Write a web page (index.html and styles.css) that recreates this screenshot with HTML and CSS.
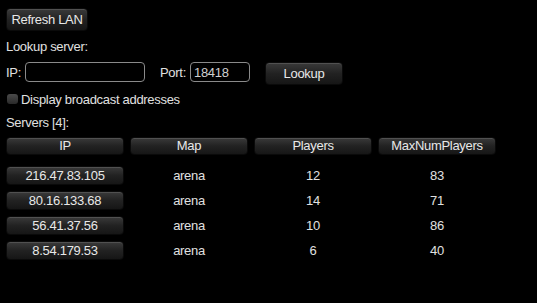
FILE: index.html
```html
<!DOCTYPE html>
<html>
<head>
	<meta charset="UTF-8">
	<title>LAN servers</title>
	<link rel="stylesheet" href="styles.css">
</head>
<body>
	<div class="panel">
		<button class="btn refresh">Refresh LAN</button>

		<p class="label lookup-title">Lookup server:</p>
		<div class="lookup">
			<span class="label">IP:</span>
			<input type="text" class="field ip-field" value="">
			<span class="label port-label">Port:</span>
			<input type="text" class="field port-field" value="18418">
			<button class="btn lookup-btn">Lookup</button>
		</div>

		<label class="check-row">
			<span class="check"></span>
			<span class="label">Display broadcast addresses</span>
		</label>

		<p class="label servers-title">Servers [4]:</p>
		<div class="servers">
			<div class="btn head">IP</div>
			<div class="btn head">Map</div>
			<div class="btn head">Players</div>
			<div class="btn head">MaxNumPlayers</div>

			<div class="btn addr">216.47.83.105</div>
			<div class="cell">arena</div>
			<div class="cell">12</div>
			<div class="cell">83</div>

			<div class="btn addr">80.16.133.68</div>
			<div class="cell">arena</div>
			<div class="cell">14</div>
			<div class="cell">71</div>

			<div class="btn addr">56.41.37.56</div>
			<div class="cell">arena</div>
			<div class="cell">10</div>
			<div class="cell">86</div>

			<div class="btn addr">8.54.179.53</div>
			<div class="cell">arena</div>
			<div class="cell">6</div>
			<div class="cell">40</div>
		</div>
	</div>
</body>
</html>
```

FILE: styles.css
```css
html,body{
	margin:0;
	padding:0;
	background:#000;
}
body{
	font-family:"Liberation Sans",Arial,sans-serif;
	font-size:13px;
	letter-spacing:-0.3px;
	color:#e0e0e0;
}
p{
	margin:0;
}
.panel{
	padding:8px 0 0 6px;
}
.btn{
	font-family:inherit;
	font-size:13px;
	letter-spacing:-0.3px;
	color:#e8e8e8;
	background:linear-gradient(#3a3a3a,#222 50%,#161616);
	border:1px solid #0a0a0a;
	border-radius:4px;
	box-shadow:inset 0 1px 0 rgba(255,255,255,0.12);
	text-align:center;
	padding:0;
	box-sizing:border-box;
}
.refresh{
	display:block;
	width:82px;
	height:23px;
}
.lookup-title{
	margin-top:8px;
	line-height:16px;
}
.lookup{
	display:flex;
	align-items:center;
	margin-top:5px;
	height:24px;
}
.field{
	background:#000;
	color:#cfcfcf;
	border:1px solid #8a8a8a;
	border-radius:4px;
	height:20px;
	box-sizing:border-box;
	font-family:inherit;
	font-size:13px;
	letter-spacing:-0.3px;
	padding:0 3px;
	margin:0;
	outline:none;
}
.ip-field{
	width:120px;
	margin-left:4px;
}
.port-label{
	margin-left:15px;
}
.port-field{
	width:60px;
	margin-left:4px;
}
.lookup-btn{
	width:78px;
	height:23px;
	margin-left:15px;
	margin-top:2px;
}
.check-row{
	display:flex;
	align-items:center;
	margin-top:7px;
	height:16px;
}
.check{
	width:11px;
	height:10px;
	margin-left:1px;
	margin-right:3px;
	border-radius:3px;
	background:linear-gradient(#4a4a4a,#2a2a2a);
}
.servers-title{
	margin-top:8px;
	line-height:16px;
}
.servers{
	display:grid;
	grid-template-columns:repeat(4,118px);
	grid-template-rows:23px repeat(4,19px);
	column-gap:6px;
	row-gap:6px;
	margin-top:6px;
}
.head{
	height:18px;
	line-height:16px;
	align-self:start;
}
.addr{
	line-height:17px;
}
.cell{
	text-align:center;
	line-height:19px;
}
```
